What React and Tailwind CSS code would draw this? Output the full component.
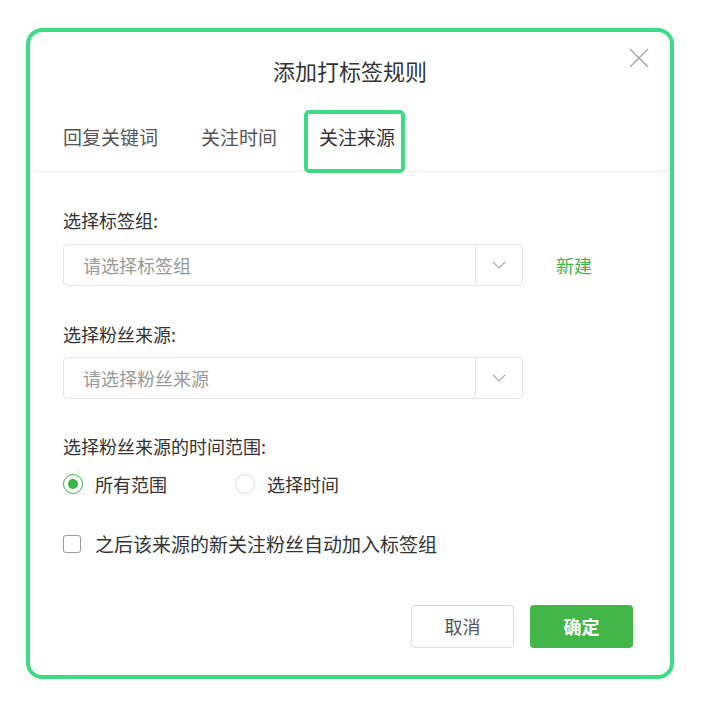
import { useState } from 'react';

const FONT = { fontFamily: '"Noto Sans CJK SC", "Noto Sans", sans-serif' };

function Chevron() {
  return (
    <svg width="14" height="8" viewBox="0 0 14 8" fill="none">
      <path d="M1 1l6 6 6-6" stroke="#aaa" strokeWidth="1.2" />
    </svg>
  );
}

function Select({ placeholder }) {
  return (
    <div className="flex h-[42px] w-[460px] rounded-[4px] border border-[#e6e6e6] bg-white">
      <div className="flex flex-1 items-center pl-[19px] text-[18px] text-[#999]">{placeholder}</div>
      <div className="flex w-[47px] items-center justify-center border-l border-[#e6e6e6]">
        <Chevron />
      </div>
    </div>
  );
}

function Radio({ checked, label, onClick }) {
  return (
    <button type="button" onClick={onClick} className="flex items-center gap-[12px]">
      <span
        className={
          checked
            ? 'flex h-[20px] w-[20px] items-center justify-center rounded-full border-[1.5px] border-[#3cb44a]'
            : 'flex h-[20px] w-[20px] items-center justify-center rounded-full border-[1.5px] border-[#dedede]'
        }
      >
        {checked && <span className="h-[10px] w-[10px] rounded-full bg-[#3cb44a]" />}
      </span>
      <span className="text-[18px] leading-[24px] text-[#333]">{label}</span>
    </button>
  );
}

export default function App() {
  const [range, setRange] = useState('all');
  const [auto, setAuto] = useState(false);
  const tabs = ['回复关键词', '关注时间'];

  return (
    <div className="min-h-screen bg-white pl-[26px] pt-[28px]" style={FONT}>
      <div className="relative h-[651px] w-[648px] rounded-[16px] border-4 border-[#3ddc84] bg-white">
        {/* header */}
        <button type="button" className="absolute right-[20px] top-[15px]">
          <svg width="22" height="22" viewBox="0 0 22 22">
            <path d="M2 2l18 18M20 2L2 20" stroke="#a8a8a8" strokeWidth="1.5" />
          </svg>
        </button>
        <h2 className="pt-[23px] text-center text-[22px] leading-[30px] text-[#333]">添加打标签规则</h2>

        {/* tabs */}
        <div className="mt-[25px] flex h-[62px] items-start border-b border-[#eeeeee] pl-[33px]">
          {tabs.map((t, i) => (
            <div
              key={t}
              className={
                i === 0
                  ? 'pt-[14px] text-[19px] leading-[26px] text-[#555]'
                  : 'ml-[43px] pt-[14px] text-[19px] leading-[26px] text-[#555]'
              }
            >
              {t}
            </div>
          ))}
          <div className="ml-[27px] h-[63px] w-[101px] rounded-[5px] border-4 border-[#3ddc84] pl-[11px] pt-[10px] text-[19px] leading-[26px] text-[#333]">
            关注来源
          </div>
        </div>

        {/* body */}
        <div className="px-[33px] pt-[36px]">
          <div className="text-[18px] leading-[24px] text-[#333]">选择标签组:</div>
          <div className="mt-[12px] flex items-center">
            <Select placeholder="请选择标签组" />
            <button type="button" className="ml-[33px] text-[18px] text-[#3cb44a]">
              新建
            </button>
          </div>

          <div className="mt-[36px] text-[18px] leading-[24px] text-[#333]">选择粉丝来源:</div>
          <div className="mt-[11px]">
            <Select placeholder="请选择粉丝来源" />
          </div>

          <div className="mt-[35px] text-[18px] leading-[24px] text-[#333]">选择粉丝来源的时间范围:</div>
          <div className="mt-[14px] flex items-center gap-[68px]">
            <Radio checked={range === 'all'} label="所有范围" onClick={() => setRange('all')} />
            <Radio checked={range === 'time'} label="选择时间" onClick={() => setRange('time')} />
          </div>

          <button type="button" onClick={() => setAuto(!auto)} className="mt-[36px] flex items-center gap-[14px]">
            <span
              className={
                auto
                  ? 'h-[18px] w-[18px] rounded-[3px] border-[1.5px] border-[#3cb44a] bg-[#3cb44a]'
                  : 'h-[18px] w-[18px] rounded-[3px] border-[1.5px] border-[#9a9a9a] bg-white'
              }
            />
            <span className="text-[19px] leading-[24px] text-[#333]">之后该来源的新关注粉丝自动加入标签组</span>
          </button>

          <div className="mt-[49px] flex justify-end gap-[16px] pr-[4px]">
            <button
              type="button"
              className="h-[43px] w-[103px] rounded-[4px] border border-[#dcdcdc] bg-white text-[18px] text-[#555]"
            >
              取消
            </button>
            <button type="button" className="h-[43px] w-[103px] rounded-[4px] bg-[#43b649] text-[18px] font-bold text-white">
              确定
            </button>
          </div>
        </div>
      </div>
    </div>
  );
}
